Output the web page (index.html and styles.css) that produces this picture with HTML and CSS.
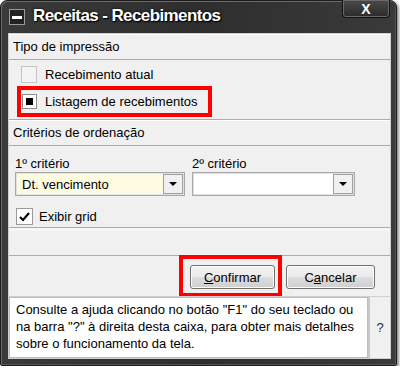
FILE: index.html
```html
<!DOCTYPE html>
<html lang="pt">
<head>
    <meta charset="UTF-8">
    <title>Receitas - Recebimentos</title>
    <link rel="stylesheet" href="styles.css">
</head>
<body>
    <div class="window">
        <div class="titlebar">
            <div class="sys-icon"><span></span></div>
            <div class="title">Receitas - Recebimentos</div>
            <div class="close">X</div>
        </div>
        <div class="content">
            <div class="section-head">Tipo de impressão</div>
            <div class="options">
                <div class="check-row">
                    <span class="box disabled"></span>
                    <span>Recebimento atual</span>
                </div>
                <div class="check-row marked">
                    <span class="box filled"><i></i></span>
                    <span>Listagem de recebimentos</span>
                </div>
            </div>
            <div class="section-head">Critérios de ordenação</div>
            <div class="criteria">
                <div class="combos">
                    <div class="field">
                        <label>1º critério</label>
                        <div class="combo yellow">
                            <span class="value">Dt. vencimento</span>
                            <span class="drop"><i></i></span>
                        </div>
                    </div>
                    <div class="field">
                        <label>2º critério</label>
                        <div class="combo second">
                            <span class="value"></span>
                            <span class="drop"><i></i></span>
                        </div>
                    </div>
                </div>
                <div class="check-row grid-row">
                    <span class="box">
                        <svg width="11" height="10" viewBox="0 0 11 10"><path d="M1 5 L4 8 L10 1" fill="none" stroke="#000" stroke-width="2"/></svg>
                    </span>
                    <span>Exibir grid</span>
                </div>
            </div>
            <div class="spacer"></div>
            <div class="actions">
                <div class="btn-wrap">
                    <button class="btn confirm"><u>C</u>onfirmar</button>
                </div>
                <button class="btn cancel">C<u>a</u>ncelar</button>
            </div>
            <div class="help">
                <div class="help-text">Consulte a ajuda clicando no botão "F1" do seu teclado ou na barra "?" à direita desta caixa, para obter mais detalhes sobre o funcionamento da tela.</div>
                <div class="help-q">?</div>
            </div>
        </div>
    </div>
</body>
</html>
```

FILE: styles.css
```css
body {
    margin: 0;
    background: #fff;
    font-family: 'Liberation Sans', Arial, sans-serif;
    font-size: 13px;
    color: #000;
}
.window {
    width: 397px;
    height: 366px;
    box-sizing: border-box;
    padding: 0 5px 6px 7px;
    background: linear-gradient(to right, #3a3a3a, #2e2e2e 50%, #3a3a3a);
    border: 1px solid #1c1c1c;
    border-radius: 7px 7px 2px 2px;
    box-shadow: 2px 2px 3px rgba(0, 0, 0, 0.45), inset 1px 1px 0 #6a6a6a, inset -1px -1px 0 #555;
    display: flex;
    flex-direction: column;
}
.titlebar {
    height: 32px;
    display: flex;
    align-items: flex-start;
    position: relative;
}
.sys-icon {
    width: 14px;
    height: 14px;
    margin: 8px 0 0 1px;
    border: 1px solid #9a9a9a;
    background: #222;
    display: flex;
    align-items: center;
    justify-content: center;
}
.sys-icon span {
    width: 10px;
    height: 3px;
    background: #fff;
}
.title {
    margin: 5px 0 0 8px;
    color: #fff;
    font-size: 17px;
    font-weight: bold;
    letter-spacing: -0.6px;
    text-shadow: 0 0 3px #000, 1px 1px 1px #000;
}
.close {
    position: absolute;
    top: -1px;
    right: 1px;
    width: 48px;
    height: 18px;
    box-sizing: border-box;
    border: 1px solid #111;
    border-top: none;
    border-radius: 0 0 4px 4px;
    background: linear-gradient(to bottom, #4a4a4a, #2a2a2a);
    box-shadow: inset 0 0 0 1px #6a6a6a;
    color: #fff;
    font-weight: bold;
    font-size: 14px;
    text-align: center;
    line-height: 18px;
}
.content {
    flex: 1;
    background: #f0f0f0;
    border: 1px solid #cfcfcf;
    display: flex;
    flex-direction: column;
}
.section-head {
    height: 24px;
    line-height: 24px;
    padding-left: 4px;
    border-bottom: 1px solid #acacac;
    border-top: 1px solid #fff;
}
.options {
    height: 60px;
    padding: 6px 0 0 12px;
    box-sizing: border-box;
    border-bottom: 1px solid #acacac;
    display: flex;
    flex-direction: column;
    gap: 3px;
}
.check-row {
    display: flex;
    align-items: center;
    gap: 8px;
    height: 17px;
}
.box {
    width: 13px;
    height: 13px;
    border: 1px solid #8e8e8e;
    background: #fff;
    display: flex;
    align-items: center;
    justify-content: center;
}
.box.disabled {
    width: 14px;
    height: 15px;
    border-color: #c4c4c4;
    background: #f4f4f4;
}
.box.filled i {
    width: 7px;
    height: 7px;
    background: #000;
}
.check-row.marked {
    width: 186px;
    height: 23px;
    margin-left: -4px;
    padding-left: 1px;
    border: 4px solid #ff0000;
    gap: 8px;
}
.criteria {
    height: 82px;
    box-sizing: border-box;
    padding: 10px 0 0 6px;
    border-bottom: 1px solid #acacac;
}
.combos {
    display: flex;
    gap: 7px;
}
.field label {
    display: block;
    height: 16px;
}
.combo {
    width: 170px;
    height: 24px;
    box-sizing: border-box;
    border: 1px solid #a7a7a7;
    box-shadow: inset 0 0 0 1px #e2e2e2;
    background: #fff;
    display: flex;
    align-items: center;
}
.combo.second {
    width: 163px;
}
.combo.yellow {
    background: #fffbe1;
}
.combo .value {
    flex: 1;
    padding-left: 6px;
}
.drop {
    width: 18px;
    height: 18px;
    margin-right: 1px;
    border: 1px solid #a0a0a0;
    background: #f0f0f0;
    display: flex;
    align-items: center;
    justify-content: center;
}
.drop i {
    width: 0;
    height: 0;
    border-left: 4px solid transparent;
    border-right: 4px solid transparent;
    border-top: 4px solid #000;
}
.grid-row {
    margin: 12px 0 0 1px;
    gap: 6px;
}
.grid-row .box {
    width: 15px;
    height: 15px;
    border-color: #9a9a9a;
}
.spacer {
    height: 24px;
    border-top: 3px solid #f6f6f6;
    border-bottom: 1px solid #acacac;
}
.actions {
    height: 40px;
    display: flex;
    justify-content: flex-end;
    align-items: flex-start;
    gap: 4px;
    padding-right: 15px;
}
.btn-wrap {
    margin-top: -1px;
    padding: 6px 3px 4px 7px;
    border: 4px solid #ff0000;
    display: flex;
}
.btn {
    height: 24px;
    font-family: inherit;
    font-size: 13px;
    color: #000;
    border: 1px solid #707070;
    border-radius: 3px;
    background: linear-gradient(to bottom, #f2f2f2, #ebebeb 50%, #dddddd 50%, #cfcfcf);
    box-shadow: inset 0 0 0 1px #fcfcfc;
    padding: 0;
}
.btn.confirm {
    width: 85px;
}
.btn.cancel {
    width: 89px;
    margin-top: 9px;
}
.help {
    flex: 1;
    display: flex;
    border-top: 1px solid #d0d0d0;
}
.help-text {
    flex: 1;
    background: #fff;
    border: 1px solid #bdbdbd;
    padding: 3px 6px;
    font-size: 13px;
    line-height: 17px;
}
.help-q {
    width: 20px;
    border-left: 2px solid #c8c8c8;
    display: flex;
    align-items: center;
    justify-content: center;
    color: #1c2b4a;
    font-size: 13px;
}
```
